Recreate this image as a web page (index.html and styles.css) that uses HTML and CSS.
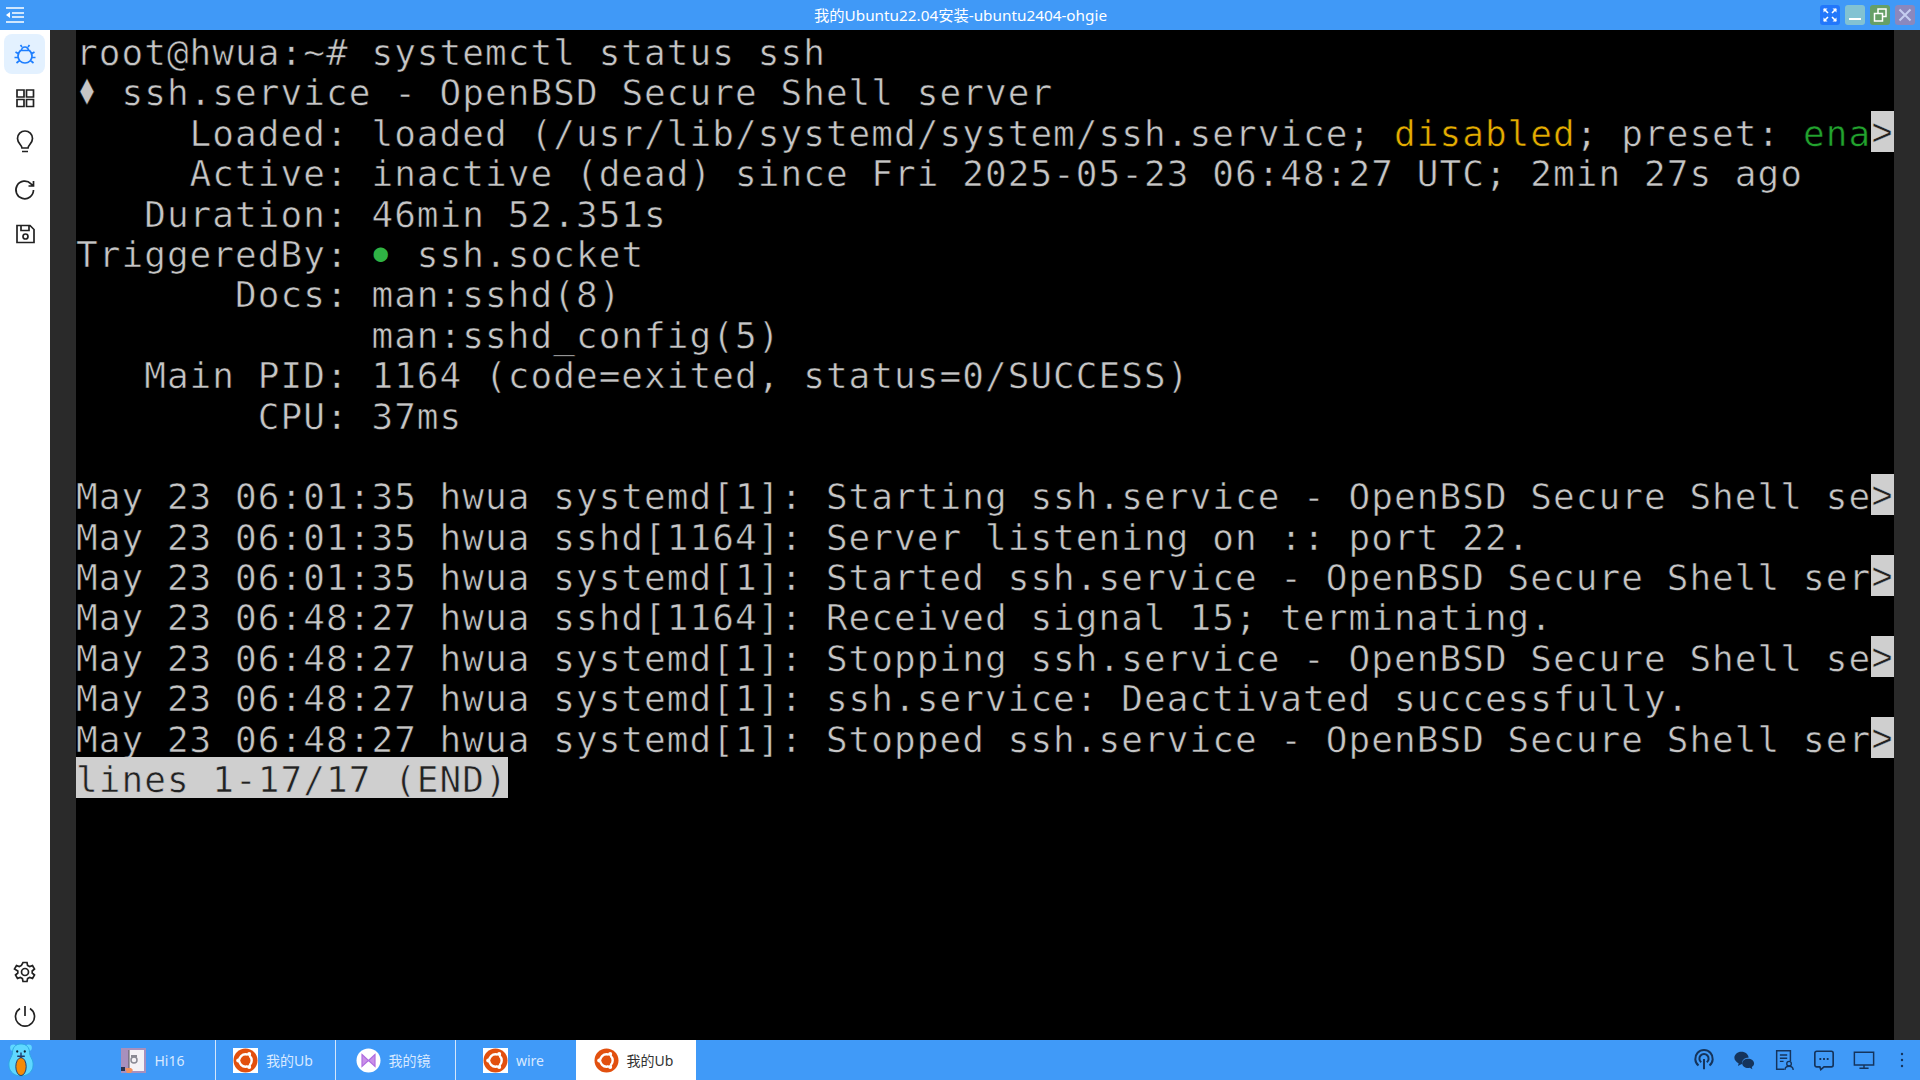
FILE: index.html
```html
<!DOCTYPE html>
<html lang="zh">
<head>
<meta charset="utf-8">
<title>我的Ubuntu22.04安装-ubuntu2404-ohgie</title>
<link rel="stylesheet" href="styles.css">
</head>
<body>
<svg class="defs" width="0" height="0" aria-hidden="true">
  <symbol id="ubuntu" viewBox="0 0 25 25">
    <circle cx="12.5" cy="12.5" r="12" fill="#e2500f"/>
    <circle cx="12.5" cy="12.5" r="6.2" fill="none" stroke="#fff" stroke-width="2.4"/>
    <path d="M12.5 12.5L4 12.5M12.5 12.5L17 5M12.5 12.5L17 20" stroke="#e2500f" stroke-width="1.6"/>
    <circle cx="5.2" cy="12.5" r="2" fill="#fff"/>
    <circle cx="16.2" cy="6.1" r="2" fill="#fff"/>
    <circle cx="16.2" cy="18.9" r="2" fill="#fff"/>
  </symbol>
</svg>
<div class="app">
  <header class="titlebar">
    <svg class="menu-icon" viewBox="0 0 18 16" width="18" height="16">
      <path d="M0 1h18M6 6h12M6 10h12M0 15h18" stroke="#fff" stroke-width="1.6" fill="none"/>
      <path d="M0 8l4-3v6z" fill="#fff"/>
    </svg>
    <div class="title">我的Ubuntu22.04安装-ubuntu2404-ohgie</div>
    <div class="win-controls">
      <button class="win-btn full"><svg viewBox="0 0 20 20" width="20" height="20"><path d="M4 4l4 4M16 4l-4 4M4 16l4-4M16 16l-4-4" stroke="#fff" stroke-width="1.6"/><path d="M3.5 3.5h4l-4 4zM16.500 3.500v4l-4-4zM3.500 16.500v-4l4 4zM16.500 16.500h-4l4-4z" fill="#fff"/></svg></button>
      <button class="win-btn min"><svg viewBox="0 0 20 20" width="20" height="20"><path d="M4 14h12" stroke="#fff" stroke-width="2"/></svg></button>
      <button class="win-btn max"><svg viewBox="0 0 20 20" width="20" height="20"><path d="M4.500 8.500h8v7.500h-8zM8 8.500v-4.500h8v7.500h-3.500" stroke="#fff" stroke-width="1.500" fill="none"/></svg></button>
      <button class="win-btn close"><svg viewBox="0 0 20 20" width="20" height="20"><path d="M4.500 4.500l11 11M15.500 4.500l-11 11" stroke="#c5cdf0" stroke-width="2"/></svg></button>
    </div>
  </header>
  <main class="main">
    <nav class="sidebar">
      <div class="side-group">
        <div class="side-btn active"><svg viewBox="0 0 24 24" width="24" height="24" class="ic blue"><path d="M7.500 8.500h9c1.700 1.500 2.500 3.500 2.500 5.500 0 4-3 7-7 7s-7-3-7-7c0-2 .8-4 2.500-5.500zM8.500 8.500a3.500 3.500 0 0 1 7 0M9 5L7.500 3M15 5l1.500-2M5.800 12L2.500 10M18.200 12l3.300-2M5 15.500H1.500M19 15.500h3.500M6.500 18.500L3.500 21M17.500 18.500l3 2.500"/></svg></div>
        <div class="side-btn"><svg viewBox="0 0 24 24" width="24" height="24" class="ic"><path d="M4 4h7v7H4zM13.500 4h7v7h-7zM4 13.500h7v7H4zM13.500 13.500h7v7h-7z"/></svg></div>
        <div class="side-btn"><svg viewBox="0 0 24 24" width="24" height="24" class="ic"><path d="M9 18c0-3-4.500-4.500-4.500-9.500a7.500 7.500 0 0 1 15 0c0 5-4.500 6.500-4.500 9.500zM9 21.500h6"/></svg></div>
        <div class="side-btn refresh"><svg viewBox="0 0 24 24" width="24" height="24" class="ic"><path d="M20.500 12a8.800 8.800 0 1 1-2.500-6.200L20.500 8M20.500 3v5h-5"/></svg></div>
        <div class="side-btn"><svg viewBox="0 0 24 24" width="24" height="24" class="ic"><path d="M4 3.500h13l4 4v13H4zM8 3.500v5h8v-5"/><circle cx="12.500" cy="14.500" r="2.500"/></svg></div>
      </div>
      <div class="side-group">
        <div class="side-btn"><svg viewBox="0 0 24 24" width="24" height="24" class="ic"><path d="M10 2.500h4l.6 3 2 1.100 2.900-1 2 3.400-2.300 2v2l2.300 2-2 3.400-2.900-1-2 1.100-.6 3h-4l-.6-3-2-1.100-2.900 1-2-3.400 2.300-2v-2L1.500 9l2-3.400 2.900 1 2-1.100z"/><circle cx="12" cy="12" r="3.500"/></svg></div>
        <div class="side-btn"><svg viewBox="0 0 24 24" width="24" height="24" class="ic"><path d="M12 2v10M7 4.500a9.500 9.500 0 1 0 10 0"/></svg></div>
      </div>
    </nav>
    <section class="terminal">
      <div class="line">root@hwua:~# systemctl status ssh</div>
      <div class="line"><span class="diamond">♦</span> ssh.service - OpenBSD Secure Shell server</div>
      <div class="line">     Loaded: loaded (/usr/lib/systemd/system/ssh.service; <span class="yellow">disabled</span>; preset: <span class="green">ena</span><span class="more">&gt;</span></div>
      <div class="line">     Active: inactive (dead) since Fri 2025-05-23 06:48:27 UTC; 2min 27s ago</div>
      <div class="line">   Duration: 46min 52.351s</div>
      <div class="line">TriggeredBy: <span class="bullet">●</span> ssh.socket</div>
      <div class="line">       Docs: man:sshd(8)</div>
      <div class="line">             man:sshd_config(5)</div>
      <div class="line">   Main PID: 1164 (code=exited, status=0/SUCCESS)</div>
      <div class="line">        CPU: 37ms</div>
      <div class="line"> </div>
      <div class="line">May 23 06:01:35 hwua systemd[1]: Starting ssh.service - OpenBSD Secure Shell se<span class="more">&gt;</span></div>
      <div class="line">May 23 06:01:35 hwua sshd[1164]: Server listening on :: port 22.</div>
      <div class="line">May 23 06:01:35 hwua systemd[1]: Started ssh.service - OpenBSD Secure Shell ser<span class="more">&gt;</span></div>
      <div class="line">May 23 06:48:27 hwua sshd[1164]: Received signal 15; terminating.</div>
      <div class="line">May 23 06:48:27 hwua systemd[1]: Stopping ssh.service - OpenBSD Secure Shell se<span class="more">&gt;</span></div>
      <div class="line">May 23 06:48:27 hwua systemd[1]: ssh.service: Deactivated successfully.</div>
      <div class="line">May 23 06:48:27 hwua systemd[1]: Stopped ssh.service - OpenBSD Secure Shell ser<span class="more">&gt;</span></div>
      <div class="line"><span class="inverse">lines 1-17/17 (END)</span></div>
    </section>
  </main>
  <footer class="taskbar">
    <div class="start">
      <svg viewBox="0 0 28 36" width="28" height="34">
        <circle cx="6" cy="5" r="3.500" fill="#5fd8ff"/><circle cx="22" cy="5" r="3.500" fill="#5fd8ff"/>
        <path d="M14 1c6 0 9 4 9 9 0 2 1 4 3 8 2 6 1 16-12 17C1 34 0 24 2 18c2-4 3-6 3-8 0-5 3-9 9-9z" fill="#5fd8ff" stroke="#2aa8e0"/>
        <ellipse cx="14" cy="25" rx="5.500" ry="9.500" fill="#f58a07" stroke="#1c3c70"/>
        <circle cx="10" cy="9" r="1.200" fill="#123"/><circle cx="18" cy="9" r="1.200" fill="#123"/>
        <path d="M14 10v6M10 14h8" stroke="#1c3c70" stroke-width="1.500"/>
      </svg>
    </div>
    <div class="tabs">
      <div class="tab">
        <svg class="tab-icon" viewBox="0 0 25 25" width="25" height="25">
          <rect width="25" height="25" fill="#a890bd"/>
          <path d="M8 2h15v21H8z" fill="#f4f2f6"/><path d="M8 2v21" stroke="#555" stroke-width="1"/>
          <circle cx="13" cy="12" r="3" fill="none" stroke="#8a8a94" stroke-width="1.500"/><path d="M10 7h6v2h-6z" fill="#8a8a94"/>
          <path d="M0 19h4v4H0z" fill="#2a3350"/><path d="M4 20h6l2 2-2 3H6z" fill="#f09060"/>
        </svg>
        <span class="tab-label">Hi16</span>
      </div>
      <div class="tab">
        <svg class="tab-icon square" width="25" height="25"><use href="#ubuntu"/></svg>
        <span class="tab-label">我的Ub</span>
      </div>
      <div class="tab">
        <svg class="tab-icon" viewBox="0 0 25 25" width="25" height="25">
          <circle cx="12.500" cy="12.500" r="12" fill="#fff"/>
          <path d="M6 6.500l6.500 6-6.500 6zM19 6.500l-6.500 6 6.500 6z" fill="#c990e8" stroke="#b06ee0" stroke-width="1.200"/>
        </svg>
        <span class="tab-label">我的镜</span>
      </div>
      <div class="tab">
        <svg class="tab-icon square" width="25" height="25"><use href="#ubuntu"/></svg>
        <span class="tab-label">wire</span>
      </div>
      <div class="tab current">
        <svg class="tab-icon" width="25" height="25"><use href="#ubuntu"/></svg>
        <span class="tab-label">我的Ub</span>
      </div>
    </div>
    <div class="tray">
      <svg viewBox="0 0 24 24" width="22" height="22" class="tray-ic"><path d="M6 18a9.500 9.500 0 1 1 12 0M9 14.500a5 5 0 1 1 6 0M12 11v11" stroke-width="2.200"/></svg>
      <svg viewBox="0 0 24 24" width="22" height="22" class="tray-fill"><path d="M9 3c4.700 0 8 3 8 6.500l-.6 0c-3.600 0-6.400 2.500-6.400 5.500 0 .5 0 1 .2 1.300L9 16.500l-3.500 2 .6-3C3.500 14 1.500 12 1.500 9.500 1.500 6 5 3 9 3z"/><path d="M16.500 10.500c3.500 0 6.500 2.200 6.500 5 0 1.800-1 3-2.500 4.200l.6 2.300-2.800-1.500c-3.800 1-8.300-1.200-8.300-5 0-2.800 3-5 6.500-5z"/></svg>
      <svg viewBox="0 0 24 24" width="22" height="22" class="tray-ic"><path d="M12 22H4V2h15v11M7.500 6.500h8M7.500 10h8M7.500 13.500h4" stroke-width="1.600"/><circle cx="17.500" cy="16" r="2.500" stroke-width="1.500"/><path d="M13 23c0-3 2-4.200 4.500-4.200S22 20 22 23" stroke-width="1.500"/></svg>
      <svg viewBox="0 0 24 24" width="22" height="22" class="tray-ic"><path d="M4 2.500h16a2 2 0 0 1 2 2v13a2 2 0 0 1-2 2h-8l-3.500 3-1-3H4a2 2 0 0 1-2-2v-13a2 2 0 0 1 2-2z" stroke-width="1.800"/><path d="M7 11h2M11 11h2M15 11h2" stroke-width="2.200"/></svg>
      <svg viewBox="0 0 24 24" width="22" height="22" class="tray-ic"><path d="M1.500 3.500h21v14h-21zM12 17.500v3M7 21h10" stroke-width="1.600"/></svg>
      <svg viewBox="0 0 4 16" width="4" height="16" class="tray-dots"><circle cx="2" cy="2" r="1.200"/><circle cx="2" cy="8" r="1.200"/><circle cx="2" cy="14" r="1.200"/></svg>
    </div>
  </footer>
</div>
</body>
</html>
```
FILE: styles.css
```css
* { box-sizing: border-box; }
html, body { margin: 0; height: 100%; overflow: hidden; }
body { background: #000; font-family: "Noto Sans", "Noto Sans CJK SC", sans-serif; }
.defs { position: absolute; }
.app { display: flex; flex-direction: column; width: 1920px; height: 1080px; }

.titlebar { flex: 0 0 30px; height: 30px; background: #4099f7; position: relative; display: flex; align-items: center; justify-content: center; padding: 0 5px 0 6px; }
.menu-icon { position: absolute; left: 6px; top: 7px; }
.title { color: #fff; font-size: 15.300px; line-height: 30px; font-family: "Noto Sans", "Noto Sans CJK SC", sans-serif; }
.win-controls { position: absolute; right: 5px; top: 5px; display: flex; gap: 5px; }
.win-btn { width: 20px; height: 20px; padding: 0; border: 0; border-radius: 3px; display: block; }
.win-btn svg { display: block; }
.full { background: #2277fb; }
.min { background: #82c2d2; }
.max { background: #669f66; }
.close { background: #8a88bd; }

.main { flex: 1; display: flex; min-height: 0; }
.sidebar { flex: 0 0 50px; width: 50px; background: #fff; display: flex; flex-direction: column; justify-content: space-between; padding: 4px 4px 4px; }
.side-group { display: flex; flex-direction: column; gap: 4px; }
.side-btn { width: 41px; height: 40px; border-radius: 8px; display: flex; align-items: center; justify-content: center; }
.side-btn.active { background: #e3f1ff; }
.side-btn.refresh { margin-top: 4px; }
.ic { fill: none; stroke: #222; stroke-width: 1.700; }
.ic.blue { stroke: #1e7fff; }

.terminal { flex: 1; background: #000; border-left: 26px solid #2a2a2a; border-right: 26px solid #2a2a2a; font-family: "DejaVu Sans Mono", monospace; font-size: 36px; letter-spacing: 1.050px; color: #c6c6c6; overflow: hidden; -webkit-text-stroke: 0.6px #000; }
.line { height: 40.400px; line-height: 46.400px; white-space: pre; }
.yellow { color: #e5ad00; }
.green { color: #22a32e; }
.diamond { display: inline-block; line-height: 0.800; transform: scale(0.850, 1.250); }
.more { background: #cfcfcf; color: #222; display: inline-block; width: 22.720px; height: 41px; line-height: 50px; vertical-align: top; font-family: "Liberation Mono", monospace; letter-spacing: 0; -webkit-text-stroke: 0.4px #cfcfcf; }
.inverse { background: #cfcfcf; color: #222; display: inline-block; height: 41px; vertical-align: top; -webkit-text-stroke: 0.6px #cfcfcf; }
.bullet { display: inline-block; width: 22.720px; padding-right: 4px; font-size: 24px; line-height: 1; letter-spacing: 0; color: #2fb344; text-align: center; vertical-align: 6px; -webkit-text-stroke: 0; }

.taskbar { flex: 0 0 40px; height: 40px; background: #409af8; display: flex; align-items: center; }
.start { flex: 0 0 96px; padding-left: 7px; display: flex; align-items: center; }
.tabs { display: flex; height: 40px; }
.tab { width: 120px; height: 40px; display: flex; align-items: center; justify-content: center; gap: 8px; padding-right: 5px; border-right: 1px solid #d4e6fb; font-size: 14px; color: #d8e9ff; }
.tab:nth-child(4) { border-right: 0; }
.tab.current { background: #fff; color: #333; border-right: 0; }
.tab-icon { display: block; flex: none; }
.tab-icon.square { background: #fff; }
.tray { margin-left: auto; display: flex; align-items: center; gap: 18px; padding-right: 16px; }
.tray-ic { fill: none; stroke: #15345c; }
.tray-fill { fill: #15345c; }
.tray-dots { fill: #15345c; margin-left: 7px; }
```
